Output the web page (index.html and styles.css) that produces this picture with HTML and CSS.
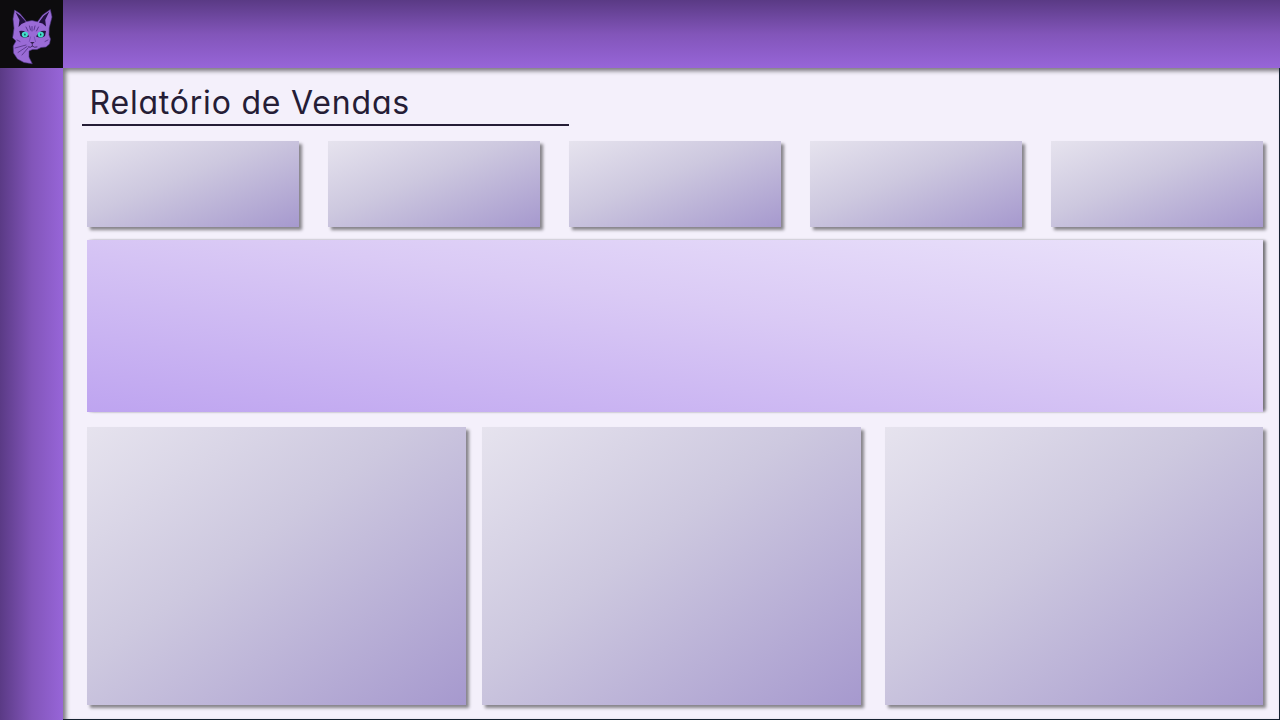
FILE: index.html
```html
<!DOCTYPE html>
<html lang="pt-BR">
<head>
<meta charset="utf-8">
<title>Relatório de Vendas</title>
<link rel="stylesheet" href="styles.css">
</head>
<body>
<div class="app">
  <div class="logo">
    <svg viewBox="0 0 63 68" width="63" height="68" aria-label="Gato">
      <g stroke-linejoin="round" stroke-linecap="round">
        <path d="M14 28 L13 19 L14.6 10 L20 13.5 L26.5 21.5 L32 20.5 L37.5 21.8 L42.5 15 L50.3 9.5 L52 17 L49.2 28 L49 35 L50.5 39 L49.5 44 L46 47 L41 47.5 L37 49.5 L32.5 49.5 L29 51 L29 57 L32.3 63.8 L24 62.5 L17.5 59 L13.5 53 L13.2 46 L16 41 L12.8 38 Z" fill="#9a6bd6" stroke="#4c3483" stroke-width=".6"/>
        <path d="M15.5 12 L20.8 16 L26 22 L21.5 24 L18.5 27 L19.5 20 Z" fill="#21103f"/>
        <path d="M49.3 11.5 L43.5 16 L38.8 22.5 L42.5 23.5 L46 26.5 L45.2 20 Z" fill="#21103f"/>
        <path d="M19.3 31 Q26 29.8 29.2 36.5 Q24 39 20.5 36 Z M46 31 Q39.5 29.8 36 36.5 Q41 39 45 36 Z" fill="#24133f"/>
        <ellipse cx="24.9" cy="34.6" rx="3.1" ry="2.8" fill="#42dfca"/>
        <ellipse cx="40.7" cy="34.6" rx="3.1" ry="2.8" fill="#42dfca"/>
        <path d="M24.9 34v1M40.7 34v1" stroke="#0b3340" stroke-width="1.2"/>
        <path d="M32 26.5v4.5M29.5 26l1 4M35 26l-1 4M26 27l2 4M38.5 27l-2 4" stroke="#47277d" stroke-width=".8" fill="none"/>
        <path d="M30.5 37l-1.2 4.5M34.3 37l1.2 4.5" stroke="#6c43ac" stroke-width=".7"/>
        <path d="M30 42h4.6l-2.3 2.3z" fill="#342052"/>
        <path d="M32.3 44.5v1.5M28.5 47q2.5 1 3.8-1q2 2 4.7 1" stroke="#342052" stroke-width=".8" fill="none"/>
        <path d="M26 45L15 48M27 46.5L18 52.5M28 48L22 55M17 40l3 1.5M48 40l-3 1.5" stroke="#462974" stroke-width=".7" fill="none"/>
      </g>
    </svg>
  </div>
  <header class="topbar"></header>
  <nav class="sidebar"></nav>
  <main class="content">
    <h1 class="title">Relatório de Vendas</h1>
    <section class="kpis">
      <div class="card"></div>
      <div class="card"></div>
      <div class="card"></div>
      <div class="card"></div>
      <div class="card"></div>
    </section>
    <section class="banner"></section>
    <section class="charts">
      <div class="card"></div>
      <div class="card"></div>
      <div class="card"></div>
    </section>
  </main>
</div>
</body>
</html>
```
FILE: styles.css
```css
* { box-sizing: border-box; }

body {
  margin: 0;
  overflow: hidden;
}

.app {
  display: grid;
  grid-template-columns: 63px 1217px;
  grid-template-rows: 68px 652px;
  width: 1280px;
  height: 720px;
}

.logo {
  background: #0d0c0e;
}

.logo svg { display: block; }

.topbar {
  background: linear-gradient(to bottom, #5a3a85, #8255b9 50%, #9765d8);
}

.sidebar {
  background: linear-gradient(to right, #5a3a85, #8255b9 50%, #9765d8);
}

.content {
  display: flex;
  flex-direction: column;
  padding: 18px 16px 0 24px;
  background: #f4f0fb;
  border-right: 1px solid #14202f;
  border-bottom: 1px solid #14202f;
  box-shadow: inset 3px 3px 4px rgba(0, 0, 0, .5);
}

.title {
  width: 487px;
  height: 40px;
  margin: 0 0 15px -5px;
  padding-left: 7.5px;
  border-bottom: 2px solid #251d36;
  color: #251d36;
  font: 400 32px/34px Inter, sans-serif;
  font-feature-settings: "cv11";
  letter-spacing: .8px;
  white-space: nowrap;
}

.card {
  background: linear-gradient(to bottom right, #e6e3ee, #cdc8df 43%, #a699ce);
  box-shadow: 3px 3px 3px rgba(0, 0, 0, .45);
}

.kpis {
  display: grid;
  grid-template-columns: repeat(5, 212px);
  gap: 29px;
  height: 86px;
}

.banner {
  height: 172px;
  margin: 13px 0 15px;
  background: linear-gradient(to top right, #bea4f0, #dacaf5 57%, #ebe3fb);
  box-shadow: 4px 0 3px -1px rgba(0, 0, 0, .4), 2px 0 2px rgba(0, 0, 0, .2);
}

.charts {
  display: grid;
  grid-template-columns: 379px 379px 378px;
  justify-content: start;
  column-gap: 16px;
  height: 278px;
}

.charts .card:last-child {
  margin-left: 8px;
  margin-right: -8px;
}
```
